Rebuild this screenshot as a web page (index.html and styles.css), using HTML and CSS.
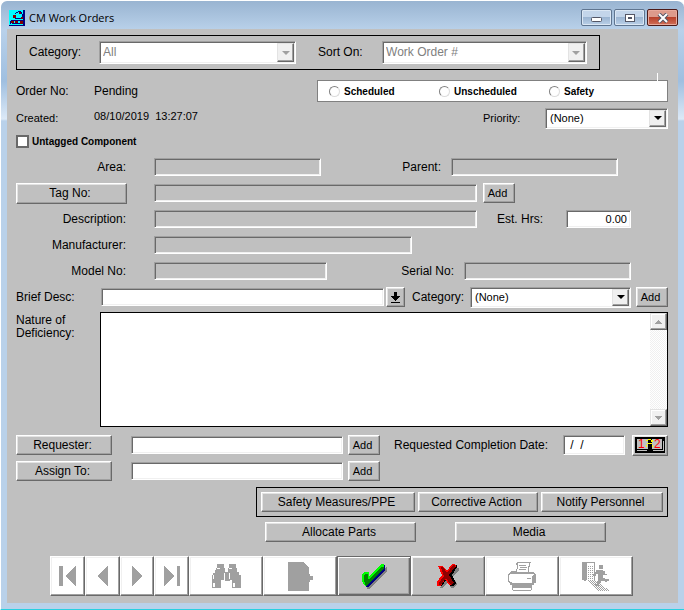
FILE: index.html
```html
<!DOCTYPE html>
<html lang="en">
<head>
    <meta charset="UTF-8">
    <meta name="viewport" content="width=device-width, initial-scale=1.0">
    <title>CM Work Orders</title>
    <link rel="stylesheet" href="styles.css">
</head>
<body>
    <main class="window">
        <header class="title-bar">
            <svg class="app-icon" viewBox="0 0 16 16" shape-rendering="crispEdges">
                <path fill="#00ffff" d="M0 0h16v16H0z"/>
                <path fill="#000080" d="M14 0h2v16h-2zM0 15h16v1H0zM9 1h3v1H9zM7 2h2v1H7zM12 2h1v2h-1zM6 3h1v1H6zM13 4h1v5h-1zM6 8h6v1H6zM2 10h12v1H2zM1 11h1v3H1zM3 13h9v1H3z"/>
                <path fill="#800000" d="M10 2h2v2h-2zM4 5h3v3H4zM12 7h2v2h-2zM2 11h3v2H2zM6 11h3v2H6zM11 11h3v3h-3z"/>
            </svg>
            <h1>CM Work Orders</h1>
            <div class="window-buttons">
                <button class="win-btn" aria-label="Minimize"><svg viewBox="0 0 12 10"><rect x=".5" y="4.5" width="10" height="4" rx="1" fill="#fff" stroke="#535666"/></svg></button>
                <button class="win-btn" aria-label="Maximize"><svg viewBox="0 0 12 10"><rect x="1.5" y="1.5" width="9" height="7" fill="#fff" stroke="#535666"/><rect x="4.5" y="4.5" width="3" height="1" fill="#9bb5d2" stroke="#535666"/></svg></button>
                <button class="win-btn close" aria-label="Close"><svg viewBox="0 0 12 10"><path d="M2 1l8 8M10 1L2 9" stroke="#535666" stroke-width="4"/><path d="M2 1l8 8M10 1L2 9" stroke="#fff" stroke-width="2"/></svg></button>
            </div>
        </header>

        <form class="pane">
            <div class="filter">
                <label for="filterCategory">Category:</label>
                <div class="combo big disabled">
                    <select id="filterCategory" disabled><option>All</option></select>
                    <span class="arrow"></span>
                </div>
                <label for="sortOn">Sort On:</label>
                <div class="combo big disabled">
                    <select id="sortOn" disabled><option>Work Order #</option></select>
                    <span class="arrow"></span>
                </div>
            </div>

            <div class="row order">
                <span>Order No:</span>
                <span>Pending</span>
                <div class="radios">
                    <label><input type="radio" name="kind">Scheduled</label>
                    <label><input type="radio" name="kind">Unscheduled</label>
                    <label><input type="radio" name="kind">Safety</label>
                    <i class="tick"></i>
                </div>
            </div>
            <div class="row created small">
                <span>Created:</span>
                <span class="stamp">08/10/2019&nbsp; 13:27:07</span>
                <label for="priority">Priority:</label>
                <div class="combo">
                    <select id="priority"><option>(None)</option></select>
                    <span class="arrow"></span>
                </div>
            </div>
            <label class="untagged"><input type="checkbox">Untagged Component</label>

            <div class="row area">
                <label class="right" for="area">Area:</label>
                <input class="field locked" id="area" readonly>
                <label class="right near" for="parent">Parent:</label>
                <input class="field locked" id="parent" readonly>
            </div>
            <div class="row tag">
                <button type="button" class="btn tag-btn">Tag No:</button>
                <input class="field locked" aria-label="Tag No" readonly>
                <button type="button" class="btn add">Add</button>
            </div>
            <div class="row description">
                <label class="right" for="description">Description:</label>
                <input class="field locked" id="description" readonly>
                <label class="right far" for="hours">Est. Hrs:</label>
                <input class="field hours" id="hours" value="0.00">
            </div>
            <div class="row manufacturer">
                <label class="right" for="manufacturer">Manufacturer:</label>
                <input class="field locked" id="manufacturer" readonly>
            </div>
            <div class="row model">
                <label class="right" for="model">Model No:</label>
                <input class="field locked" id="model" readonly>
                <label class="right near" for="serial">Serial No:</label>
                <input class="field locked" id="serial" readonly>
            </div>
            <div class="row brief">
                <label for="brief">Brief Desc:</label>
                <input class="field" id="brief">
                <button type="button" class="btn pick" aria-label="Pick description">
                    <svg viewBox="0 0 11 11" shape-rendering="crispEdges"><path d="M4 0h3v4h3v1H9v1H8v1H7v1H6v1H5V8H4V7H3V6H2V5H1V4h3zM1 10h9v1H1z"/></svg>
                </button>
                <label class="mid" for="category">Category:</label>
                <div class="combo">
                    <select id="category"><option>(None)</option></select>
                    <span class="arrow"></span>
                </div>
                <button type="button" class="btn add">Add</button>
            </div>

            <div class="memo-row">
                <label for="nature">Nature of<br>Deficiency:</label>
                <div class="memo">
                    <textarea id="nature"></textarea>
                    <div class="scrollbar">
                        <button type="button" class="scroll-btn" aria-label="Scroll up"><svg viewBox="0 0 7 4" shape-rendering="crispEdges"><path d="M3 0h1v1h1v1h1v1h1v1H0V3h1V2h1V1h1z"/></svg></button>
                        <button type="button" class="scroll-btn" aria-label="Scroll down"><svg viewBox="0 0 7 4" shape-rendering="crispEdges"><path d="M0 0h7v1H6v1H5v1H4v1H3V3H2V2H1V1H0z"/></svg></button>
                    </div>
                </div>
            </div>

            <div class="row requester">
                <button type="button" class="btn wide">Requester:</button>
                <input class="field" aria-label="Requester">
                <button type="button" class="btn add">Add</button>
                <label class="due" for="due">Requested Completion Date:</label>
                <input class="field date" id="due" value=" /  /">
                <button type="button" class="btn calendar" aria-label="Calendar">
                    <svg viewBox="0 0 30 16" shape-rendering="crispEdges">
                        <path d="M0 0h30v16H0z"/>
                        <path fill="#c0c0c0" d="M2 2h11v10H2zM17 2h10v10H17zM2 13h10v1H2zM18 13h10v1H18zM28 4h1v10h-1z"/>
                        <text x="3" y="11">1</text>
                        <text x="19" y="11">2</text>
                        <path fill="#ff0" d="M13 2h3v1h-3zM11 3h2v1h-2zM16 3h2v2h-2zM12 6h5v1h-5zM11 8h1v2h-1zM17 8h1v2h-1z"/>
                    </svg>
                </button>
            </div>
            <div class="row assign">
                <button type="button" class="btn wide">Assign To:</button>
                <input class="field" aria-label="Assign To">
                <button type="button" class="btn add">Add</button>
            </div>

            <div class="actions">
                <button type="button" class="btn">Safety Measures/PPE</button>
                <button type="button" class="btn">Corrective Action</button>
                <button type="button" class="btn">Notify Personnel</button>
            </div>
            <div class="extras">
                <button type="button" class="btn">Allocate Parts</button>
                <button type="button" class="btn">Media</button>
            </div>

            <div class="toolbar">
                <button type="button" class="tool" aria-label="First" disabled><svg width="17" height="21" viewBox="0 0 17 21"><path d="M0 0h4v20H0zM17 0v20L6 10z"/></svg></button>
                <button type="button" class="tool" aria-label="Previous" disabled><svg width="11" height="21" viewBox="0 0 11 21"><path d="M11 0v20L0 10z"/></svg></button>
                <button type="button" class="tool" aria-label="Next" disabled><svg width="11" height="21" viewBox="0 0 11 21"><path d="M0 0v20l11-10z"/></svg></button>
                <button type="button" class="tool" aria-label="Last" disabled><svg width="16" height="21" viewBox="0 0 16 21"><path d="M0 0v20l11-10zM13 0h3v20h-3z"/></svg></button>
                <button type="button" class="tool" aria-label="Find" disabled>
                    <svg width="29" height="24" viewBox="0 0 29 24">
                        <path d="M5 0h7v4h1v4h3V4h1V0h7v4h1v4h2v3h2v13h-9v-8h-2v1h-5v-1h-4v8H0V11h1V9h2V6h1V4h1z"/>
                        <path fill="#fff" d="M5 4h3v1H5zM17 4h3v1h-3zM12 9h1v7h-1zM17 9h1v6h-1zM1 11h1v4H1zM1 19h2v4H1zM21 19h2v4h-2z"/>
                    </svg>
                </button>
                <button type="button" class="tool" aria-label="New" disabled><svg width="25" height="29" viewBox="0 0 25 29"><path d="M0 0h16v1h1v1h1v1h1v1h1v1h1v7h1v2h3v4h-3v2h-1v9H0z"/></svg></button>
                <button type="button" class="tool live default" aria-label="Save">
                    <svg width="25" height="25" viewBox="0 0 25 25">
                        <path fill="#808080" d="M24 3h1v4L8 25H5v-2z"/>
                        <path fill="#000080" d="M22 1h1v5L6 23H4l-2-3z"/>
                        <path fill="#0f0" d="M0 10l2-2h5v4L19 0h3v3L6 19H5v3H3l-3-5z"/>
                        <path fill="#008000" d="M2 11l2-1h2v5h1L20 3h2v1L5 22H4l-2-5z"/>
                    </svg>
                </button>
                <button type="button" class="tool live" aria-label="Cancel">
                    <svg width="22" height="24" viewBox="0 0 22 24">
                        <path fill="#808080" d="M20 4h2v2l-6 7 4 7-3 4h-3l-3-6-5 6H3l7-11z"/>
                        <path fill="#000" d="M18 1h2v2l-5 8 4 8-3 3h-3l-4-6-4 6H2l7-11z"/>
                        <path fill="#f00" d="M1 2h4l5 5 5-7h3l1 2-7 9 5 8-3 2h-2l-4-6-4 7H0v-4l5-7z"/>
                        <path fill="#900000" d="M4 3h2l4 6 6-8h2v2l-6 8 5 8-3 2-5-7-5 7H2v-2l5-7z"/>
                    </svg>
                </button>
                <button type="button" class="tool" aria-label="Print" disabled>
                    <svg width="28" height="29" viewBox="0 0 28 29">
                        <path d="M9 0h14v1h-1v4h-1v5h5v1h1v1h1v9h-2v2h-2v5h-1v1H5v-1H4v-5H2v-2H1v-1H0v-8h1v-1h1v-1h1v-1h5V7h1V3H8V1h1z"/>
                        <path fill="#fff" d="M10 1h11v3h-1v6H9V7h1zM3 12h23v1h-1v1h-1v7H4v-1H2v-1H1v-6h1v-1h1zM5 26h18v2H5z"/>
                        <path d="M11 3h7v1h-7zM12 5h7v1h-7zM11 7h7v1h-7zM19 16h4v1h-4z"/>
                    </svg>
                </button>
                <button type="button" class="tool" aria-label="Exit" disabled>
                    <svg width="28" height="29" viewBox="0 0 28 29">
                        <defs>
                            <pattern id="dots" width="2" height="2" patternUnits="userSpaceOnUse"><path d="M0 0h1v1H0zM1 1h1v1H1z"/></pattern>
                            <pattern id="holes" width="2" height="2" patternUnits="userSpaceOnUse"><path d="M0 0h1v1H0z"/></pattern>
                        </defs>
                        <path d="M0 0h13v18h-1V1H5v17H4v1H2v-1H0z"/>
                        <path fill="url(#holes)" d="M6 3h6v14H6z"/>
                        <path fill="url(#dots)" d="M5 18h8l15 11H15z"/>
                        <path d="M17 3h4v4h-4zM14 8h7v1h2v3h2v1h-4v3h2v1h4v2h-2v1h-2v-1h-4v2h-2v3h-4v-2h2v-3h1v-7h-2v2h-3v-2h1v-2h2z"/>
                    </svg>
                </button>
            </div>
        </form>
    </main>
</body>
</html>
```
FILE: styles.css
```css
* {
    box-sizing: border-box;
}

body {
    margin: 0;
    background-color: #fff;
    color: #000;
    font-family: "Liberation Sans", Arial, sans-serif;
    font-size: 12px;
    line-height: 13px;
}

button,
input,
select,
textarea {
    font: inherit;
    color: inherit;
    border-radius: 0;
    margin: 0;
}

.window {
    padding: 0 6px 6px;
    border-left: 1px solid #fff;
    border-top: 1px solid #fff;
    border-bottom: 1px solid #28d0e0;
    border-radius: 7px 7px 0 0;
    background: linear-gradient(#99b4d1, #b9d1ea 29px, #9fbfe0 80px, #dce9f7 118px, #b9d1ea 120px);
}

.title-bar {
    display: flex;
    align-items: center;
    gap: 4px;
    height: 28px;
    padding: 5px 0 0 2px;
}

.app-icon {
    width: 16px;
    height: 16px;
}

.title-bar h1 {
    flex: 1;
    margin: 0;
    font: 11px/16px "Open Sans", sans-serif;
}

.window-buttons {
    display: flex;
    gap: 2px;
}

.win-btn {
    display: flex;
    align-items: center;
    justify-content: center;
    width: 31px;
    height: 17px;
    padding: 0;
    border: 1px solid #5f7590;
    border-radius: 2px;
    box-shadow: inset 0 0 0 1px #dbe7f4;
    background: linear-gradient(#c3d5ea 50%, #9bb5d2 50%, #bad0e8);
}

.win-btn svg {
    width: 12px;
    height: 10px;
}

.win-btn.close {
    border-color: #4c1b19;
    box-shadow: inset 0 0 0 1px #e8a99b;
    background: linear-gradient(#dd9a8b 45%, #b8412b 50%, #d0705a);
}

.pane {
    padding: 6px 10px 7px 9px;
    background-color: #c0c0c0;
}

.filter {
    display: grid;
    grid-template-columns: 70px 198fr 86px 206fr;
    align-items: center;
    height: 35px;
    margin-right: 68px;
    padding: 0 12px;
    border: 1px solid #000;
}

.filter label + .combo + label {
    padding-left: 22px;
}

/* sunken and raised edges */
.field,
.combo {
    border: 1px solid #fff;
    border-top-color: #a0a0a0;
    border-left-color: #a0a0a0;
    box-shadow: inset 1px 1px 0 #696969, inset -1px -1px 0 #f0f0f0;
}

.field {
    width: 100%;
    min-width: 0;
    height: 18px;
    padding: 0 3px;
    background-color: #fff;
    outline: none;
}

.field.locked {
    background-color: #c0c0c0;
}

.field.hours {
    font-size: 11px;
    text-align: right;
}

.field.date {
    height: 20px;
}

.btn {
    height: 20px;
    padding: 0 3px 0 0;
    border: 1px solid #696969;
    border-top-color: #fff;
    border-left-color: #fff;
    box-shadow: inset -1px -1px 0 #a0a0a0, inset 1px 1px 0 #e3e3e3;
    background-color: #c0c0c0;
}

.btn.add {
    width: 32px;
    font-size: 11px;
    justify-self: end;
}

.combo {
    position: relative;
    height: 21px;
    padding: 2px;
    background-color: #fff;
}

.combo select {
    appearance: none;
    display: block;
    width: 100%;
    height: 100%;
    padding: 0 0 0 2px;
    border: 0;
    background: none;
    font-size: 11px;
    outline: none;
}

.combo .arrow {
    position: absolute;
    top: 1px;
    right: 1px;
    bottom: 1px;
    display: flex;
    align-items: center;
    justify-content: center;
    width: 17px;
    border: 1px solid #696969;
    border-top-color: #e3e3e3;
    border-left-color: #e3e3e3;
    box-shadow: inset -1px -1px 0 #a0a0a0;
    background-color: #f0f0f0;
    pointer-events: none;
}

.combo .arrow::before {
    content: "";
    width: 0;
    height: 0;
    border: 4px solid transparent;
    border-top-color: #000;
    border-bottom: 0;
}

.combo.big {
    height: 23px;
}

.combo.big select {
    padding-left: 1px;
    font-size: 12px;
}

.combo.disabled select {
    color: #808080;
    opacity: 1;
}

.combo.disabled .arrow::before {
    border-top-color: #a0a0a0;
}

.row {
    display: grid;
    align-items: center;
    height: 26px;
}

.right {
    padding-right: 28px;
    text-align: right;
}

.right.near {
    padding-right: 10px;
}

.right.far {
    padding-right: 23px;
}

.small {
    font-size: 11px;
}

.order {
    grid-template-columns: 78px 223fr 351fr;
    height: 24px;
    margin-top: 9px;
}

.radios {
    position: relative;
    display: grid;
    grid-template-columns: 110fr 110fr 105fr;
    align-items: center;
    height: 22px;
    padding: 0 13px 0 11px;
    border: 1px solid #808080;
    background-color: #fff;
    font-size: 10px;
    font-weight: bold;
}

.radios label {
    display: flex;
    align-items: center;
    gap: 4px;
}

.radios input {
    appearance: none;
    width: 11px;
    height: 11px;
    border: 1px solid #808080;
    border-right-color: #dcdcdc;
    border-bottom-color: #dcdcdc;
    border-radius: 50%;
    background-color: #fff;
}

.tick {
    position: absolute;
    top: -8px;
    right: 9px;
    width: 1px;
    height: 8px;
    background-color: #fff;
}

.created {
    grid-template-columns: 78px 389fr 62px 123px;
    margin-top: 2px;
}

.stamp {
    padding-bottom: 4px;
}

.untagged {
    display: flex;
    align-items: center;
    gap: 3px;
    height: 20px;
    margin-bottom: 3px;
    font-size: 10px;
    font-weight: bold;
}

.untagged input {
    appearance: none;
    width: 13px;
    height: 13px;
    border: 2px solid #696969;
    background-color: #fff;
}

.area {
    grid-template-columns: 138px 167fr 130px 167fr 50px;
}

.tag {
    grid-template-columns: 138px 323fr 38px 153px;
}

.tag-btn {
    width: 111px;
    height: 21px;
}

.description {
    grid-template-columns: 138px 323fr 89px 65px 37px;
}

.manufacturer {
    grid-template-columns: 138px 258fr 256fr;
}

.model {
    grid-template-columns: 138px 173fr 137px 167fr 37px;
}

.brief {
    grid-template-columns: 85px 283fr 21px 65px 161fr 37px;
}

.pick {
    display: flex;
    align-items: center;
    justify-content: center;
    width: 19px;
    padding: 0;
    justify-self: end;
}

.pick svg {
    width: 11px;
    height: 11px;
}

.mid {
    padding-left: 7px;
}

.memo-row {
    display: grid;
    grid-template-columns: 83px 1fr;
    margin-top: 2px;
}

.memo-row label {
    padding-top: 2px;
}

.memo {
    display: flex;
    height: 115px;
    margin-left: 1px;
    border: 1px solid #000;
    background-color: #fff;
}

.memo textarea {
    flex: 1;
    padding: 2px 4px;
    border: 0;
    background: none;
    outline: none;
    resize: none;
}

.scrollbar {
    display: flex;
    flex-direction: column;
    justify-content: space-between;
    width: 17px;
    background: repeating-conic-gradient(#f0f0f0 0 25%, #fff 0 50%) 0 0 / 2px 2px;
}

.scroll-btn {
    display: flex;
    align-items: center;
    justify-content: center;
    height: 17px;
    padding: 0;
    border: 1px solid #696969;
    border-top-color: #e3e3e3;
    border-left-color: #e3e3e3;
    box-shadow: inset -1px -1px 0 #a0a0a0, inset 1px 1px 0 #fff;
    background-color: #f0f0f0;
}

.scroll-btn svg {
    width: 7px;
    height: 4px;
    fill: #a0a0a0;
}

.requester {
    grid-template-columns: 115px 212fr 37px 183px 62px 43px;
    margin-top: 5px;
}

.assign {
    grid-template-columns: 115px 212fr 37px 288px;
}

.wide {
    width: 96px;
}

.due {
    padding-left: 14px;
}

.calendar {
    display: flex;
    align-items: center;
    justify-content: center;
    width: 36px;
    height: 21px;
    padding: 0;
    justify-self: end;
}

.calendar svg {
    width: 30px;
    height: 16px;
    font: 12px "Liberation Sans", Arial, sans-serif;
}

.calendar text {
    fill: #f00;
}

.actions {
    display: grid;
    grid-template-columns: 154fr 120fr 122fr;
    gap: 3px;
    margin: 3px 0 0 240px;
    padding: 4px;
    border: 1px solid #000;
}

.extras {
    display: grid;
    grid-template-columns: 1fr 1fr;
    gap: 39px;
    margin: 5px 62px 0 249px;
}

.toolbar {
    display: grid;
    grid-template-columns: 35fr 35fr 34fr 35fr repeat(6, 74fr);
    height: 40px;
    margin: 14px 35px 0 34px;
}

.tool {
    display: flex;
    align-items: center;
    justify-content: center;
    min-width: 0;
    padding: 0;
    border: 1px solid #696969;
    border-top-color: #fff;
    border-left-color: #fff;
    box-shadow: inset -1px -1px 0 #a0a0a0, inset 1px 1px 0 #f0f0f0;
    background-color: #fff;
}

.tool svg {
    fill: #a0a0a0;
    shape-rendering: crispEdges;
}

.tool.live {
    background-color: #c0c0c0;
}

.tool.default {
    border-color: #696969;
    box-shadow: inset 1px 1px 0 #fff, inset -1px -1px 0 #696969, inset -2px -2px 0 #a0a0a0;
}
```
